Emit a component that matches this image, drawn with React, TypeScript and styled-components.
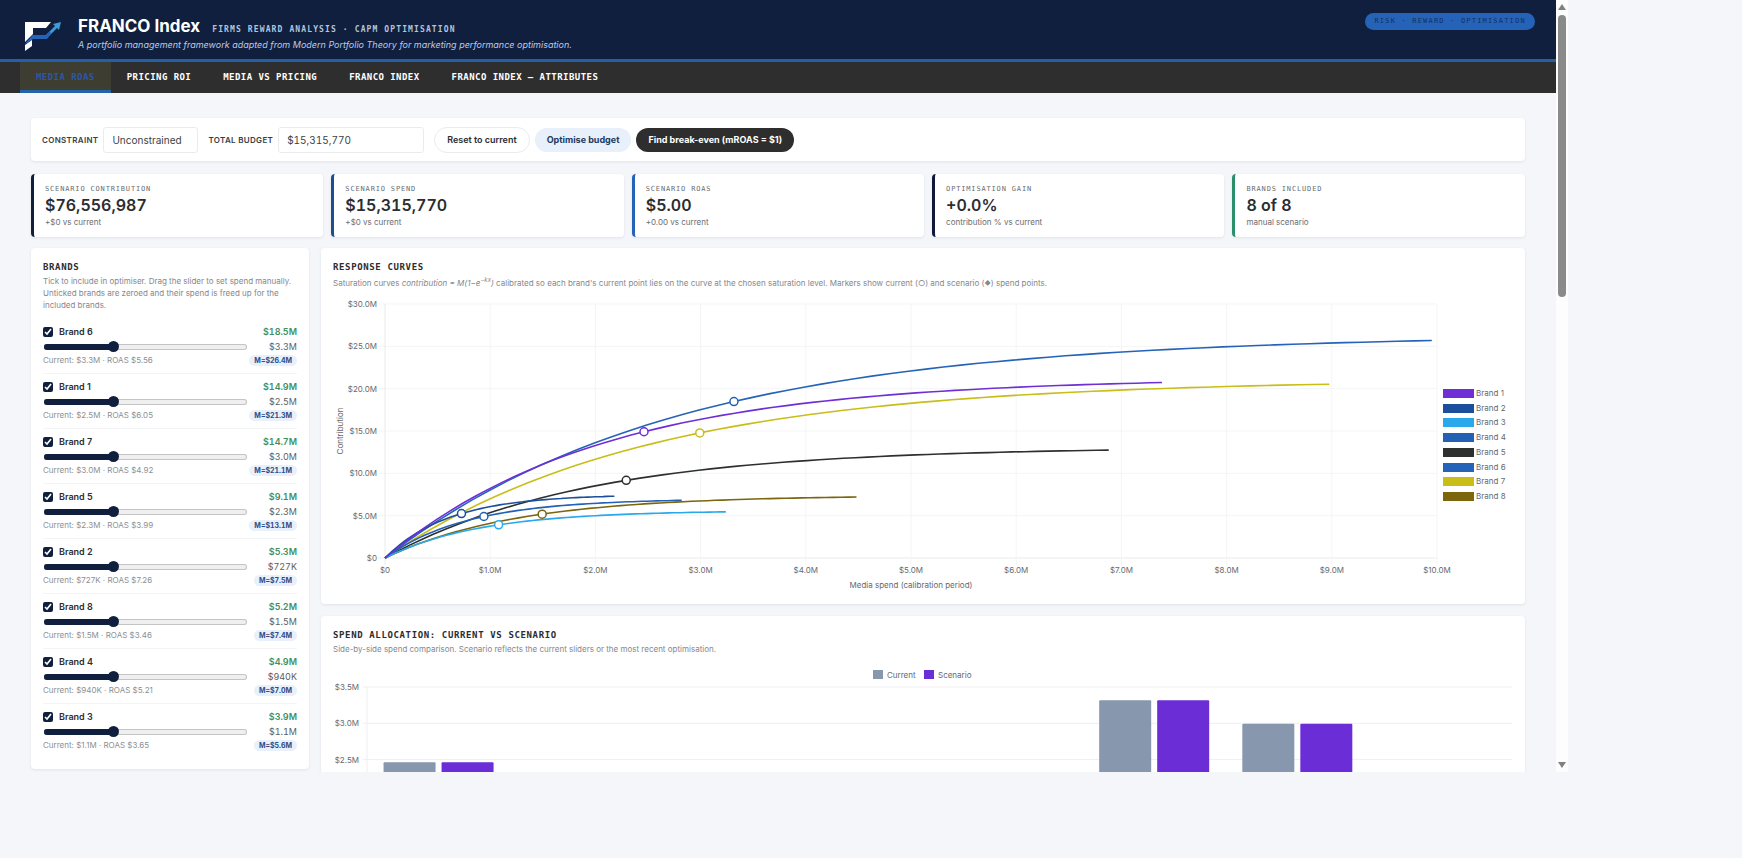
import React, { useLayoutEffect, useRef, useState } from 'react';
import styled, { createGlobalStyle } from 'styled-components';

const mono = '"DejaVu Sans Mono", "Liberation Mono", monospace';
const navy = '#0f1f3d';
const ink = '#2b2d30';
const page = '#f4f6fa';

const GlobalStyle = createGlobalStyle`
  * { box-sizing: border-box; }
  body { margin: 0; background: ${page}; color: ${ink}; font-family: Inter, "Liberation Sans", sans-serif; }
  h1, h2, p { margin: 0; }
  button, input, select { font-family: inherit; color: inherit; }
`;

const Frame = styled.div`
  display: flex;
  width: 90%;
  height: 90vh;
  overflow: hidden;
`;

const Viewport = styled.div`
  flex: 1;
  min-width: 0;
  overflow-y: auto;
  scrollbar-width: none;
`;

const Scrollbar = styled.div`
  display: flex;
  flex-direction: column;
  align-items: center;
  width: 12px;
  padding: 4px 0;
  background: #fdfdfd;
`;

const Arrow = styled.span<{ $down?: boolean }>`
  width: 0;
  border: 4px solid transparent;
  border-top: ${p => (p.$down ? '6px solid #808080' : '0')};
  border-bottom: ${p => (p.$down ? '0' : '6px solid #808080')};
`;

const Track = styled.div`
  flex: 1;
  width: 8px;
  margin: 5px 0 4px;
`;

const Thumb = styled.div`
  height: 38%;
  border-radius: 4px;
  background: #8a8a8a;
`;

const Header = styled.header`
  display: flex;
  align-items: flex-start;
  height: 62px;
  padding: 13px 21px 0 24px;
  background: ${navy};
  border-bottom: 3px solid #2460a6;
`;

const Logo = styled.svg`
  width: 38px;
  height: 32px;
  margin: 7px 16px 0 0;
`;

const Titles = styled.div`
  flex: 1;
`;

const TitleRow = styled.div`
  display: flex;
  align-items: baseline;
  gap: 12px;
`;

const Title = styled.h1`
  font-size: 17px;
  line-height: 26px;
  font-weight: 700;
  color: #fff;
`;

const Kicker = styled.span`
  font: 700 8px ${mono};
  letter-spacing: 0.14em;
  color: #b4c4dc;
`;

const Tagline = styled.p`
  font-size: 9px;
  line-height: 12px;
  font-style: italic;
  color: #bccae6;
`;

const Pill = styled.span`
  padding: 0 9px;
  border-radius: 9px;
  background: #2563b8;
  color: #14315f;
  font: 400 7px/17px ${mono};
  letter-spacing: 0.17em;
`;

const Nav = styled.nav`
  display: flex;
  height: 31px;
  padding-left: 20px;
  background: #2e2e2e;
`;

const Tab = styled.button<{ $active?: boolean }>`
  padding: 0 16px;
  border: 0;
  border-top: 2px solid transparent;
  border-bottom: 3px solid ${p => (p.$active ? '#2563a8' : 'transparent')};
  background: ${p => (p.$active ? '#3d3d32' : 'transparent')};
  color: ${p => (p.$active ? '#2c57a6' : '#fff')};
  font: 700 9px ${mono};
  letter-spacing: 0.05em;
`;

const Main = styled.main`
  padding: 25px 31px;
`;

const card = `
  background: #fff;
  border-radius: 4px;
  box-shadow: 0 1px 3px rgba(15, 31, 61, 0.09);
`;

const Toolbar = styled.form`
  ${card}
  display: flex;
  align-items: center;
  gap: 5px;
  height: 43px;
  padding: 0 11px;
`;

const FieldLabel = styled.label`
  font-size: 8px;
  font-weight: 600;
  letter-spacing: 0.04em;
  text-transform: uppercase;
  color: #3a3d42;
  &:not(:first-child) { margin-left: 5px; }
`;

const control = `
  height: 26px;
  padding: 0 8px;
  border: 1px solid #e9ebef;
  border-radius: 3px;
  background: #fff;
  color: #3c3f44;
  font-size: 10px;
  font-variant-numeric: tabular-nums;
`;

const Select = styled.select`
  ${control}
  appearance: none;
  width: 95px;
`;

const BudgetInput = styled.input`
  ${control}
  width: 146px;
  margin-right: 5px;
`;

const Button = styled.button<{ $kind?: 'soft' | 'dark' }>`
  height: ${p => (p.$kind ? '24px' : '26px')};
  padding: 0 12px;
  border: ${p => (p.$kind ? '0' : '1px solid #e9ebef')};
  border-radius: 13px;
  background: ${p => (p.$kind === 'dark' ? '#2e2e2e' : p.$kind === 'soft' ? '#e8f0fb' : '#fff')};
  color: ${p => (p.$kind === 'dark' ? '#fff' : p.$kind === 'soft' ? '#22395f' : ink)};
  font-size: 9px;
  font-weight: ${p => (p.$kind ? 700 : 600)};
`;

const Kpis = styled.section`
  display: grid;
  grid-template-columns: repeat(5, 1fr);
  gap: 8px;
  margin: 13px 0 11px;
`;

const Kpi = styled.article<{ $accent: string }>`
  ${card}
  padding: 10px 11px 9px;
  border-left: 3px solid ${p => p.$accent};
`;

const KpiLabel = styled.p`
  font: 400 7px/10px ${mono};
  letter-spacing: 0.12em;
  color: #6a6d72;
`;

const KpiValue = styled.p`
  font-size: 16px;
  line-height: 22px;
  font-weight: 600;
  font-variant-numeric: tabular-nums;
`;

const KpiNote = styled.p`
  font-size: 8px;
  line-height: 12px;
  color: #6a6d72;
`;

const Columns = styled.div`
  display: grid;
  grid-template-columns: 278px minmax(0, 1fr);
  align-items: start;
  gap: 12px;
`;

const Stack = styled.div`
  display: grid;
  gap: 12px;
`;

const Panel = styled.section`
  ${card}
  padding: 12px;
`;

const PanelTitle = styled.h2`
  font: 700 9px/14px ${mono};
  letter-spacing: 0.07em;
`;

const Hint = styled.p<{ $roomy?: boolean }>`
  margin-top: ${p => (p.$roomy ? '3px' : '1px')};
  font-size: 8px;
  line-height: 12px;
  color: #85888d;
  sup { font-size: 6px; line-height: 0; }
  small { font-size: 6px; vertical-align: 1px; }
`;

const BrandList = styled.ul`
  list-style: none;
  margin: 8px 0 0;
  padding: 0;
`;

const BrandItem = styled.li`
  height: 55px;
  padding-top: 5px;
  border-bottom: 1px solid #f3f4f6;
  &:last-child { height: 53px; border: 0; }
`;

const Line = styled.div<{ $tight?: boolean }>`
  display: flex;
  align-items: center;
  justify-content: space-between;
  height: ${p => (p.$tight ? '12px' : '15px')};
`;

const BrandName = styled.label`
  display: flex;
  align-items: center;
  gap: 6px;
  font-size: 9px;
  font-weight: 600;
`;

const Tick = styled.input`
  width: 10px;
  height: 10px;
  margin: 0;
  accent-color: ${navy};
`;

const Contribution = styled.strong`
  font-size: 9px;
  font-weight: 600;
  font-variant-numeric: tabular-nums;
  color: #3f8f60;
`;

const Slider = styled.input<{ $fill: number }>`
  appearance: none;
  width: 203px;
  height: 6px;
  margin: 0 0 0 1px;
  border-radius: 3px;
  box-shadow: inset 0 0 0 1px #c4c4c4;
  background: linear-gradient(to right, ${navy} ${p => p.$fill}%, #efefef ${p => p.$fill}%);
  &::-webkit-slider-runnable-track {
    height: 6px;
    border-radius: 3px;
    background: linear-gradient(to right, ${navy} ${p => p.$fill}%, transparent ${p => p.$fill}%);
  }
  &::-webkit-slider-thumb {
    appearance: none;
    width: 11px;
    height: 11px;
    margin-top: -3px;
    border-radius: 50%;
    background: ${navy};
  }
`;

const Spend = styled.output`
  font-size: 9px;
  font-variant-numeric: tabular-nums;
  color: #5b5e63;
`;

const Meta = styled.span`
  font-size: 8px;
  color: #8c8f94;
`;

const Ceiling = styled.span`
  padding: 0 5px;
  border-radius: 6px;
  background: #e8f0fb;
  color: #2f4b86;
  font-size: 7px;
  line-height: 11px;
  font-weight: 700;
  font-variant-numeric: tabular-nums;
`;

const Chart = styled.svg<{ $gap?: boolean }>`
  display: block;
  overflow: visible;
  width: 100%;
  margin-top: ${p => (p.$gap ? '3px' : '0')};
  text { font-family: Inter, sans-serif; font-size: 8px; fill: #66696e; }
`;

interface Brand {
  id: number;
  color: string;
  spend: number;
  roas: string;
  value: string;
  label: string;
  max: number;
}

const brands: Brand[] = [
  { id: 1, color: '#6f2fd4', spend: 2.462, roas: '6.05', value: '$14.9M', label: '$2.5M', max: 21.3 },
  { id: 2, color: '#1b4f9b', spend: 0.727, roas: '7.26', value: '$5.3M', label: '$727K', max: 7.5 },
  { id: 3, color: '#29a9ec', spend: 1.08, roas: '3.65', value: '$3.9M', label: '$1.1M', max: 5.6 },
  { id: 4, color: '#2361b5', spend: 0.94, roas: '5.21', value: '$4.9M', label: '$940K', max: 7.0 },
  { id: 5, color: '#2e3030', spend: 2.293, roas: '3.99', value: '$9.1M', label: '$2.3M', max: 13.1 },
  { id: 6, color: '#2563b8', spend: 3.317, roas: '5.56', value: '$18.5M', label: '$3.3M', max: 26.4 },
  { id: 7, color: '#c9bd17', spend: 2.992, roas: '4.92', value: '$14.7M', label: '$3.0M', max: 21.1 },
  { id: 8, color: '#7b650d', spend: 1.494, roas: '3.46', value: '$5.2M', label: '$1.5M', max: 7.4 },
];
const ranked = [6, 1, 7, 5, 2, 8, 4, 3].map(id => brands[id - 1]);

const kpis = [
  { label: 'SCENARIO CONTRIBUTION', value: '$76,556,987', note: '+$0 vs current', accent: navy },
  { label: 'SCENARIO SPEND', value: '$15,315,770', note: '+$0 vs current', accent: '#1b4f8f' },
  { label: 'SCENARIO ROAS', value: '$5.00', note: '+0.00 vs current', accent: '#2563b8' },
  { label: 'OPTIMISATION GAIN', value: '+0.0%', note: 'contribution % vs current', accent: '#10183a' },
  { label: 'BRANDS INCLUDED', value: '8 of 8', note: 'manual scenario', accent: '#2c8f6c' },
];

const tabs = ['MEDIA ROAS', 'PRICING ROI', 'MEDIA VS PRICING', 'FRANCO INDEX', 'FRANCO INDEX — ATTRIBUTES'];

function useWidth() {
  const ref = useRef<SVGSVGElement>(null);
  const [width, setWidth] = useState(1180);
  useLayoutEffect(() => {
    const node = ref.current;
    if (!node) return;
    const measure = () => setWidth(Math.round(node.getBoundingClientRect().width));
    measure();
    const observer = new ResizeObserver(measure);
    observer.observe(node);
    return () => observer.disconnect();
  }, []);
  return [ref, width] as const;
}

const rate = -Math.log(0.3);
const response = (b: Brand, spend: number) => b.max * (1 - Math.exp((-rate * spend) / b.spend));
const range = (n: number) => Array.from({ length: n }, (_, i) => i);

function ResponseChart() {
  const [ref, width] = useWidth();
  const left = 52;
  const right = width - 76;
  const top = 12;
  const bottom = 266;
  const x = (v: number) => left + ((right - left) * v) / 10;
  const y = (v: number) => bottom - ((bottom - top) * v) / 30;
  const curve = (b: Brand) =>
    range(61)
      .map(i => (3 * b.spend * i) / 60)
      .map((s, i) => `${i ? 'L' : 'M'}${x(s).toFixed(1)} ${y(response(b, s)).toFixed(1)}`)
      .join('');
  return (
    <Chart ref={ref} $gap height={300} role="img" aria-label="Response curves by brand">
      {range(7).map(i => (
        <g key={i}>
          <line x1={left - 7} x2={right} y1={y(i * 5)} y2={y(i * 5)} stroke={i ? '#f4f5f6' : '#e9eaec'} />
          <text x={left - 8} y={y(i * 5) + 3} textAnchor="end">{i ? `$${i * 5}.0M` : '$0'}</text>
        </g>
      ))}
      {range(11).map(i => (
        <g key={i}>
          <line x1={x(i)} x2={x(i)} y1={top} y2={bottom + 7} stroke={i ? '#f4f5f6' : '#e9eaec'} />
          <text x={x(i)} y={bottom + 15} textAnchor="middle">{i ? `$${i}.0M` : '$0'}</text>
        </g>
      ))}
      <text x={(left + right) / 2} y={bottom + 30} textAnchor="middle">Media spend (calibration period)</text>
      <text x={0} y={0} textAnchor="middle" transform={`translate(10 ${(top + bottom) / 2}) rotate(-90)`}>Contribution</text>
      {[...brands].reverse().map(b => (
        <path key={b.id} d={curve(b)} fill="none" stroke={b.color} strokeWidth={1.6} />
      ))}
      {brands.map(b => (
        <circle key={b.id} cx={x(b.spend)} cy={y(response(b, b.spend))} r={4} fill="#fff" stroke={b.color} strokeWidth={1.5} />
      ))}
      {brands.map((b, i) => (
        <g key={b.id}>
          <rect x={width - 70} y={97 + Math.round(i * 14.7)} width={31} height={9} fill={b.color} />
          <text x={width - 37} y={104 + Math.round(i * 14.7)}>Brand {b.id}</text>
        </g>
      ))}
    </Chart>
  );
}

function SpendChart() {
  const [ref, width] = useWidth();
  const left = 34;
  const right = width - 1;
  const top = 32;
  const bottom = 286;
  const slot = (right - left) / brands.length;
  const bar = Math.round(slot * 0.36);
  const y = (v: number) => bottom - ((bottom - top) * v) / 3.5;
  const mid = width / 2;
  return (
    <Chart ref={ref} height={310} role="img" aria-label="Current and scenario spend by brand">
      <rect x={mid - 50} y={15} width={10} height={9} fill="#8797ae" />
      <text x={mid - 36} y={23}>Current</text>
      <rect x={mid + 1} y={15} width={10} height={9} fill="#6b2ed6" />
      <text x={mid + 15} y={23}>Scenario</text>
      {[3.5, 3, 2.5].map(v => (
        <g key={v}>
          <line x1={left - 4} x2={right} y1={y(v)} y2={y(v)} stroke="#eeeff1" />
          <text x={left - 8} y={y(v) + 3} textAnchor="end">{`$${v.toFixed(1)}M`}</text>
        </g>
      ))}
      <line x1={left} x2={left} y1={top} y2={bottom} stroke="#eeeff1" />
      {brands.map((b, i) => {
        const center = left + slot * (i + 0.5);
        return (
          <g key={b.id}>
            <rect x={center - bar - 3} y={y(b.spend)} width={bar} height={bottom - y(b.spend)} rx={1} fill="#8797ae" />
            <rect x={center + 3} y={y(b.spend)} width={bar} height={bottom - y(b.spend)} rx={1} fill="#6b2ed6" />
          </g>
        );
      })}
    </Chart>
  );
}

function BrandRow({ brand }: { brand: Brand }) {
  const id = `brand-${brand.id}`;
  return (
    <BrandItem>
      <Line>
        <BrandName htmlFor={id}>
          <Tick id={id} type="checkbox" defaultChecked />
          Brand {brand.id}
        </BrandName>
        <Contribution>{brand.value}</Contribution>
      </Line>
      <Line>
        <Slider type="range" min={0} max={3} step="any" defaultValue={1} $fill={34} aria-label={`Brand ${brand.id} spend`} />
        <Spend>{brand.label}</Spend>
      </Line>
      <Line $tight>
        <Meta>Current: {brand.label} · ROAS ${brand.roas}</Meta>
        <Ceiling>M=${brand.max.toFixed(1)}M</Ceiling>
      </Line>
    </BrandItem>
  );
}

export default function App() {
  return (
    <>
      <GlobalStyle />
      <Frame>
        <Viewport>
          <Header>
            <Logo viewBox="0 0 38 32" aria-hidden="true">
              <path d="M1 2H27L22 8H9V14L1 22Z" fill="#fff" />
              <path d="M1 25L8 20V26L1 31Z" fill="#fff" />
              <path d="M1 24L9 15H22L31 6L29 4L37 2L35 10L33 8L23 18H10Z" fill="#3f9bd8" />
              <path d="M9 15H22L26 11L27 14L23 19H9L1 24Z" fill="#2563b8" />
            </Logo>
            <Titles>
              <TitleRow>
                <Title>FRANCO Index</Title>
                <Kicker>FIRMS REWARD ANALYSIS · CAPM OPTIMISATION</Kicker>
              </TitleRow>
              <Tagline>A portfolio management framework adapted from Modern Portfolio Theory for marketing performance optimisation.</Tagline>
            </Titles>
            <Pill>RISK · REWARD · OPTIMISATION</Pill>
          </Header>
          <Nav>
            {tabs.map((t, i) => (
              <Tab key={t} type="button" $active={i === 0}>{t}</Tab>
            ))}
          </Nav>
          <Main>
            <Toolbar>
              <FieldLabel htmlFor="constraint">Constraint</FieldLabel>
              <Select id="constraint">
                <option>Unconstrained</option>
              </Select>
              <FieldLabel htmlFor="budget">Total budget</FieldLabel>
              <BudgetInput id="budget" type="text" defaultValue="$15,315,770" />
              <Button type="button">Reset to current</Button>
              <Button type="button" $kind="soft">Optimise budget</Button>
              <Button type="button" $kind="dark">Find break-even (mROAS = $1)</Button>
            </Toolbar>
            <Kpis>
              {kpis.map(k => (
                <Kpi key={k.label} $accent={k.accent}>
                  <KpiLabel>{k.label}</KpiLabel>
                  <KpiValue>{k.value}</KpiValue>
                  <KpiNote>{k.note}</KpiNote>
                </Kpi>
              ))}
            </Kpis>
            <Columns>
              <Panel>
                <PanelTitle>BRANDS</PanelTitle>
                <Hint>
                  Tick to include in optimiser. Drag the slider to set spend manually. Unticked brands are zeroed and their spend is
                  freed up for the included brands.
                </Hint>
                <BrandList>
                  {ranked.map(b => (
                    <BrandRow key={b.id} brand={b} />
                  ))}
                </BrandList>
              </Panel>
              <Stack>
                <Panel>
                  <PanelTitle>RESPONSE CURVES</PanelTitle>
                  <Hint $roomy>
                    Saturation curves <em>contribution = M(1−e<sup>−kx</sup>)</em> calibrated so each brand's current point lies on
                    the curve at the chosen saturation level. Markers show current (○) and scenario (<small>◆</small>) spend points.
                  </Hint>
                  <ResponseChart />
                </Panel>
                <Panel>
                  <PanelTitle>SPEND ALLOCATION: CURRENT VS SCENARIO</PanelTitle>
                  <Hint>Side-by-side spend comparison. Scenario reflects the current sliders or the most recent optimisation.</Hint>
                  <SpendChart />
                </Panel>
              </Stack>
            </Columns>
          </Main>
        </Viewport>
        <Scrollbar aria-hidden="true">
          <Arrow />
          <Track>
            <Thumb />
          </Track>
          <Arrow $down />
        </Scrollbar>
      </Frame>
    </>
  );
}
